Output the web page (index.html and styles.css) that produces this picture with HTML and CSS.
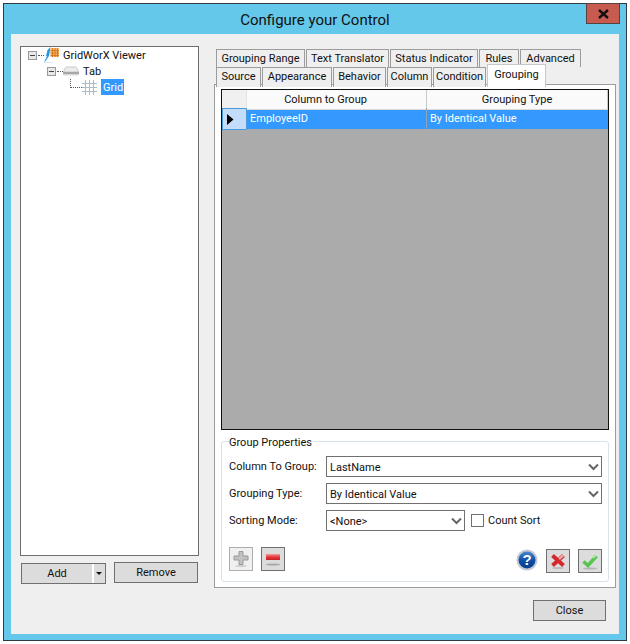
FILE: index.html
```html
<!DOCTYPE html>
<html lang="en">
<head>
<meta charset="utf-8">
<title>Configure your Control</title>
<link rel="stylesheet" href="styles.css">
</head>
<body>
<div class="window">
  <header class="titlebar">
    <span class="title">Configure your Control</span>
    <button class="win-close" aria-label="Close window">
      <svg width="13" height="10" viewBox="0 0 13 10"><path d="M2 1l9 8M11 1l-9 8" stroke="#111" stroke-width="2.400" fill="none"/></svg>
    </button>
  </header>
  <div class="client">
    <div class="main">
      <aside class="left">
        <div class="tree">
          <div class="node node-root">
            <span class="exp"></span><span class="dots"></span>
            <svg class="ico" width="16" height="16" viewBox="0 0 16 16"><path d="M6.500 0L3.500 3 2 9 3 9.500 1 13 0 16 3 12 5 9 6 4z" fill="#1f9be8"/><path d="M6.500 1h8.500v9H6.500z" fill="#f5bc78"/><path d="M6.500 3.500h8.500M6.500 6h8.500M6.500 8.500h8.500M8.500 1v9M11 1v9M13.500 1v9" stroke="#d87a1c" fill="none"/><path d="M1 15.500h8" stroke="#dcebf6"/></svg>
            <span class="label">GridWorX Viewer</span>
          </div>
          <div class="node node-tab">
            <span class="exp"></span><span class="dots"></span>
            <svg class="ico" width="16" height="10" viewBox="0 0 16 10"><path d="M3.500 1h9c1 0 2 2 3 5H.500c1-3 2-5 3-5z" fill="#ececec" stroke="#c9c9c9"/><path d="M0 6h16v2.500H0z" fill="#a8a8a8"/><path d="M1 9h14" stroke="#dcdcdc"/></svg>
            <span class="label">Tab</span>
          </div>
          <div class="node node-grid">
            <span class="elbow"></span>
            <svg class="ico" width="15" height="15" viewBox="0 0 15 15"><path d="M0 3.500h15M0 7.500h15M0 11.500h15M3.500 0v15M7.500 0v15M11.500 0v15" stroke="#a9bccd" fill="none"/></svg>
            <span class="label selected">Grid</span>
          </div>
        </div>
        <div class="left-actions">
          <div class="btn btn-add">
            <span class="add-text">Add</span>
            <span class="add-sep"></span>
            <span class="add-arrow"></span>
          </div>
          <button class="btn btn-remove">Remove</button>
        </div>
      </aside>
      <section class="right">
        <div class="tabs tabs-back">
          <span class="tab">Grouping Range</span>
          <span class="tab">Text Translator</span>
          <span class="tab">Status Indicator</span>
          <span class="tab">Rules</span>
          <span class="tab">Advanced</span>
        </div>
        <div class="tabs tabs-front">
          <span class="tab">Source</span>
          <span class="tab">Appearance</span>
          <span class="tab">Behavior</span>
          <span class="tab">Column</span>
          <span class="tab">Condition</span>
          <span class="tab tab-active">Grouping</span>
        </div>
        <div class="panel">
          <div class="grid">
            <div class="grid-row grid-head">
              <span class="corner"></span>
              <span class="hcell hcell-first">Column to Group</span>
              <span class="hcell">Grouping Type</span>
            </div>
            <div class="grid-row grid-sel">
              <span class="rowhead"><svg width="7" height="11" viewBox="0 0 7 11"><path d="M0 0l6.500 5.500L0 11z" fill="#000"/></svg></span>
              <span class="cell cell-first">EmployeeID</span>
              <span class="cell">By Identical Value</span>
            </div>
          </div>
          <div class="groupbox">
            <div class="legend">Group Properties</div>
            <div class="form-row">
              <span class="form-label">Column To Group:</span>
              <div class="select select-wide"><span class="select-text">LastName</span><svg class="chev" width="11" height="8" viewBox="0 0 11 8"><path d="M1 1.500l4.500 4.500L10 1.500" stroke="#666" stroke-width="2" fill="none"/></svg></div>
            </div>
            <div class="form-row">
              <span class="form-label">Grouping Type:</span>
              <div class="select select-wide"><span class="select-text">By Identical Value</span><svg class="chev" width="11" height="8" viewBox="0 0 11 8"><path d="M1 1.500l4.500 4.500L10 1.500" stroke="#666" stroke-width="2" fill="none"/></svg></div>
            </div>
            <div class="form-row">
              <span class="form-label">Sorting Mode:</span>
              <div class="select select-short"><span class="select-text">&lt;None&gt;</span><svg class="chev" width="11" height="8" viewBox="0 0 11 8"><path d="M1 1.500l4.500 4.500L10 1.500" stroke="#666" stroke-width="2" fill="none"/></svg></div>
              <span class="check"></span>
              <span class="check-label">Count Sort</span>
            </div>
            <div class="icon-row">
              <button class="ibtn ibtn-off" aria-label="Add"><svg width="18" height="20" viewBox="0 0 18 20"><ellipse cx="9" cy="17" rx="6" ry="1.200" fill="#cfcfcf"/><path d="M7 2.500h4v4.500h5v4h-5v4.500H7V11H2V7h5z" fill="#c2c2c2" stroke="#9a9a9a"/></svg></button>
              <button class="ibtn ibtn-minus" aria-label="Remove"><svg width="18" height="20" viewBox="0 0 18 20"><defs><linearGradient id="gm" x1="0" y1="0" x2="0" y2="1"><stop offset="0" stop-color="#f59a9a"/><stop offset=".5" stop-color="#e3383c"/><stop offset="1" stop-color="#c81e24"/></linearGradient></defs><rect x="2" y="5" width="14" height="6" fill="url(#gm)"/><ellipse cx="9" cy="15.500" rx="7" ry="1" fill="#a8a8a8"/></svg></button>
              <span class="spacer"></span>
              <svg class="help" width="22" height="22" viewBox="0 0 22 22" role="img" aria-label="Help"><defs><linearGradient id="gh" x1="0" y1="0" x2="0" y2="1"><stop offset="0" stop-color="#4c86cf"/><stop offset=".55" stop-color="#0d4ca6"/><stop offset="1" stop-color="#0a3f8c"/></linearGradient></defs><circle cx="11" cy="11" r="10.500" fill="#c4c8d0"/><circle cx="11" cy="11" r="8.500" fill="url(#gh)"/><text x="11" y="16" text-anchor="middle" class="help-q">?</text></svg>
              <button class="ibtn ibtn-x" aria-label="Cancel"><svg width="18" height="20" viewBox="0 0 18 20"><ellipse cx="9" cy="17" rx="6" ry="1" fill="#bbb"/><path d="M3.500 4.500l11 10M14.500 4.500l-11 10" stroke="#d5282e" stroke-width="4" fill="none"/><path d="M10 8l4.500-4" stroke="#f0a8a8" stroke-width="2.500" fill="none"/></svg></button>
              <button class="ibtn ibtn-ok" aria-label="Apply"><svg width="18" height="20" viewBox="0 0 18 20"><ellipse cx="9" cy="17.500" rx="7" ry="1" fill="#b5b5b5"/><path d="M2.500 10.500l4.500 4L15.500 5" stroke="#58c552" stroke-width="3.600" fill="none"/><path d="M12 7l3-3" stroke="#a8e6a2" stroke-width="2" fill="none"/></svg></button>
            </div>
          </div>
        </div>
      </section>
    </div>
    <footer class="footer"><button class="btn btn-close">Close</button></footer>
  </div>
</div>
</body>
</html>
```
FILE: styles.css
```css
* { box-sizing: border-box; }
html, body { margin: 0; padding: 0; background: #fff; }
body {
  font-family: Roboto, "Open Sans", sans-serif;
  font-size: 11px;
  color: #111;
}
button { font: inherit; color: inherit; margin: 0; padding: 0; }

.window {
  width: 624px;
  height: 638px;
  margin: 3px;
  border: 1px solid #2d3a40;
  background: #63c8ea;
  padding: 0 7px 6px;
  display: flex;
  flex-direction: column;
}
.titlebar {
  height: 30px;
  flex: none;
  display: flex;
  justify-content: center;
  align-items: flex-start;
  padding: 6px 0 0 0;
  position: relative;
}
.title { font-size: 15px; line-height: 20px; color: #111; }
.win-close {
  position: absolute;
  top: -1px;
  right: -1px;
  width: 34px;
  height: 21px;
  background: #c75b50;
  border: 1px solid #55423e;
  display: flex;
  align-items: center;
  justify-content: center;
}

.client { flex: 1; background: #efefef; display: flex; flex-direction: column; min-height: 0; }
.main { display: flex; flex: none; }
.left { width: 203px; flex: none; padding: 12px 0 0 9px; }
.tree {
  width: 179px;
  height: 510px;
  background: #fff;
  border: 1px solid #6d6d6d;
  padding-top: 0;
}
.node { display: flex; align-items: center; height: 16px; }
.node-root { padding-left: 7px; }
.node-tab { padding-left: 26px; }
.node-grid { padding-left: 49px; }
.exp {
  width: 9px;
  height: 9px;
  border: 1px solid #9a9a9a;
  background: #e8e8e8;
  flex: none;
  display: block;
  background-image: linear-gradient(#444, #444);
  background-size: 5px 1px;
  background-position: center;
  background-repeat: no-repeat;
}
.dots { width: 6px; border-top: 1px dotted #555; flex: none; margin: 0 0 0 1px; }
.ico { flex: none; }
.node-root .label { margin-left: 3px; }
.node-tab .label { margin-left: 4px; }
.elbow {
  width: 12px;
  height: 9px;
  margin-top: -8px;
  border-left: 1px dotted #555;
  border-bottom: 1px dotted #555;
  flex: none;
}
.node-grid .label { margin-left: 4px; }
.label { height: 16px; line-height: 18px; white-space: nowrap; }
.selected { background: #3399ff; color: #fff; padding: 0 2px; width: 23px; }

.left-actions { display: flex; gap: 8px; margin-top: 6px; padding-left: 1px; align-items: flex-start; }
.btn {
  background: #dcdcdc;
  border: 1px solid #707070;
  text-align: center;
  height: 21px;
  line-height: 20px;
}
.btn-add { width: 85px; margin-top: 1px; display: flex; align-items: stretch; }
.add-text { flex: 1; padding-left: 0; }
.add-sep { width: 2px; background: #fff; flex: none; }
.add-arrow { width: 11px; flex: none; position: relative; }
.add-arrow::after {
  content: "";
  position: absolute;
  left: 2px;
  top: 8px;
  border: 3px solid transparent;
  border-top-color: #111;
  border-bottom: 0;
}
.btn-remove { width: 84px; line-height: 17px; }

.right { width: 402px; flex: none; padding-top: 15px; }
.tabs { display: grid; position: relative; }
.tabs-back { grid-template-columns: 90px 84px 89px 41px 62px; padding-left: 2px; height: 18px; }
.tabs-front { grid-template-columns: 46px 71px 54px 46px 54px 59px; padding-left: 2px; height: 17px; z-index: 1; }
.tab {
  background: #efefef;
  border: 1px solid #9c9c9c;
  border-bottom: 0;
  text-align: center;
  line-height: 17px;
  white-space: nowrap;
  margin-right: 1px;
}
.tab-active {
  background: #fff;
  height: 23px;
  margin: -3px 0 0 0;
  border-color: #c8c8c8;
  line-height: 20px;
  position: relative;
}
.panel {
  background: #fff;
  border: 1px solid #9c9c9c;
  height: 504px;
  padding: 4px 6px 0 6px;
}

.grid { height: 341px; background: #ababab; border: 1px solid #111; }
.grid-row { display: grid; grid-template-columns: 25px 180px 1fr; }
.grid-head { height: 18px; background: #fff; line-height: 19px; }
.corner { background: #f0f0f0; border-right: 1px solid #e2e2e2; }
.hcell { text-align: center; background: #fafafa; border-right: 1px solid #c9c9c9; border-bottom: 1px solid #d8d8d8; }
.hcell-first { padding-right: 22px; }
.grid-sel { height: 21px; background: #3399ff; color: #fff; line-height: 22px; }
.rowhead {
  background: #c2dcfa;
  border: 1px solid #4a9bd8;
  display: flex;
  align-items: center;
  padding-left: 4px;
}
.cell { padding-left: 3px; }
.cell-first { border-right: 1px solid #8fa6b8; }

.groupbox {
  margin-top: 11px;
  height: 141px;
  border: 1px solid #d8e2e8;
  border-radius: 3px;
  padding: 0 6px 0 7px;
}
.legend {
  display: block;
  width: max-content;
  background: #fff;
  margin: -8px 0 0 0;
  padding: 0 1px 0 0;
  height: 16px;
  line-height: 18px;
}
.form-row { display: flex; align-items: center; height: 21px; margin-bottom: 6px; }
.legend + .form-row { margin-top: 6px; }
.form-label { width: 97px; flex: none; white-space: nowrap; }
.select {
  height: 21px;
  background: #fff;
  border: 1px solid #707070;
  display: flex;
  align-items: center;
  justify-content: space-between;
  padding: 0 2px 0 3px;
}
.select-text { padding-top: 2px; }
.select-wide { width: 277px; }
.select-short { width: 139px; }
.check { width: 13px; height: 13px; border: 1px solid #707070; background: #fff; margin-left: 6px; flex: none; }
.check-label { margin-left: 4px; margin-top: -1px; }

.icon-row { display: flex; align-items: flex-start; margin-top: 16px; }
.ibtn {
  width: 24px;
  height: 24px;
  display: flex;
  align-items: center;
  justify-content: center;
  background: #dcdcdc;
  border: 1px solid #707070;
  flex: none;
}
.ibtn-off { background: #f0f0f0; border-color: #adadad; margin-right: 8px; }
.spacer { flex: 1; }
.help { margin: 2px 8px 0 0; flex: none; }
.help-q { font-family: "Liberation Sans", sans-serif; font-weight: 700; font-size: 15px; fill: #fff; }
.ibtn-x, .ibtn-ok { margin-top: 2px; }
.ibtn-x { margin-right: 8px; }

.footer { display: flex; justify-content: flex-end; padding: 12px 13px 0 0; }
.btn-close { width: 73px; }
```
